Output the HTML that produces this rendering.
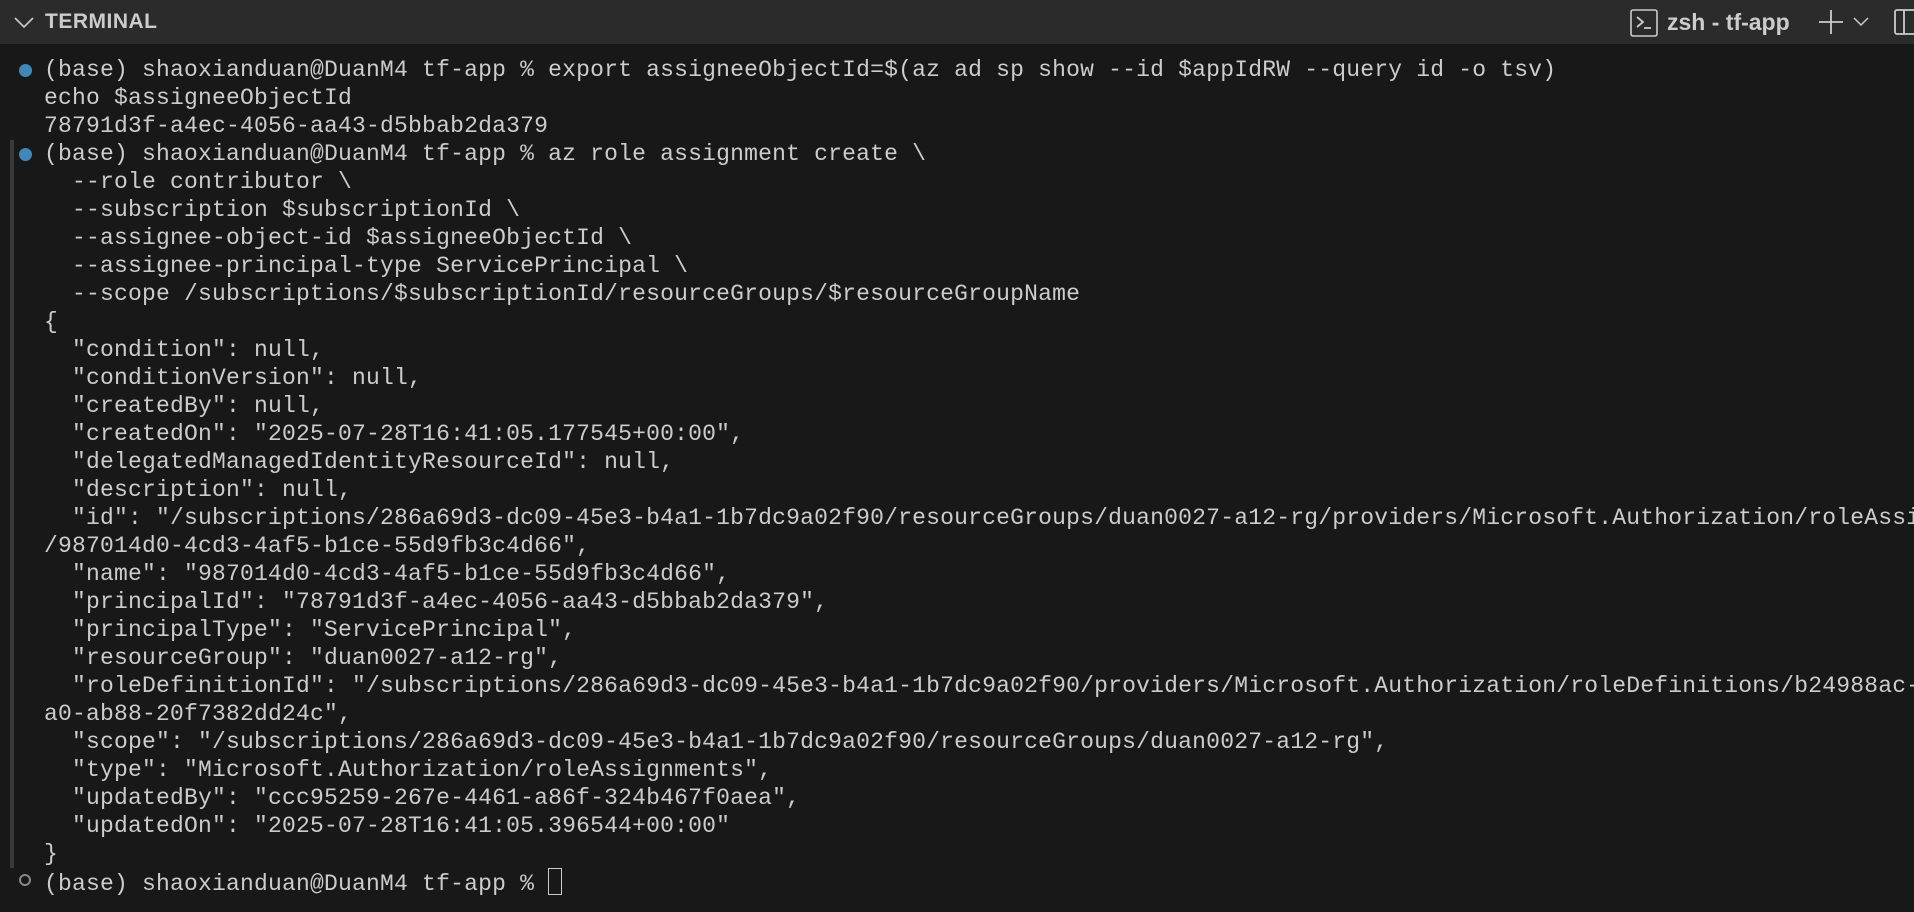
<!DOCTYPE html>
<html><head><style>
html,body{margin:0;padding:0;width:1914px;height:912px;overflow:hidden;background:#181818;}
.hdr{position:absolute;left:0;top:0;width:1914px;height:44px;background:#2b2b2b;font-family:"Liberation Sans",sans-serif;color:#cccccc;}
.t{position:absolute;left:45px;top:10px;font-size:21px;font-weight:bold;letter-spacing:0.5px;}
.z{position:absolute;left:1667px;top:9px;font-size:23px;font-weight:bold;}
.term{position:absolute;left:44px;top:56px;width:1870px;overflow:hidden;font-family:"Liberation Mono",monospace;font-size:23px;letter-spacing:0.2px;line-height:28px;color:#cccccc;white-space:pre;}
.dot{position:absolute;left:19px;width:13px;height:13px;border-radius:50%;background:#3f88b9;}
.bar{position:absolute;left:10px;width:4px;background:#3a3a3a;}
</style></head><body>
<div class="hdr">
<svg style="position:absolute;left:14px;top:15px" width="20" height="14"><path d="M1 3 L10 12 L19 3" fill="none" stroke="#ccc" stroke-width="1.6"/></svg>
<div class="t">TERMINAL</div>
<svg style="position:absolute;left:1630px;top:9px" width="28" height="28"><rect x="1" y="1" width="26" height="26" rx="2" fill="none" stroke="#ccc" stroke-width="1.6"/><path d="M7 8 L13 13 L7 18 M14 19 H21" fill="none" stroke="#ccc" stroke-width="1.8"/></svg>
<div class="z">zsh - tf-app</div>
<svg style="position:absolute;left:1818px;top:9px" width="26" height="26"><path d="M13 1 V25 M1 13 H25" stroke="#ccc" stroke-width="1.8"/></svg>
<svg style="position:absolute;left:1853px;top:17px" width="16" height="10"><path d="M1 1 L8 8 L15 1" fill="none" stroke="#ccc" stroke-width="1.5"/></svg>
<svg style="position:absolute;left:1894px;top:9px" width="20" height="26"><rect x="1" y="1" width="26" height="24" rx="2" fill="none" stroke="#ccc" stroke-width="1.8"/><path d="M10 1 V25" stroke="#ccc" stroke-width="1.8"/></svg>
</div>
<div class="dot" style="top:64px"></div>
<div class="dot" style="top:148px"></div>
<div class="bar" style="top:140px;height:728px"></div>
<div style="position:absolute;left:19px;top:874px;width:8px;height:8px;border:2px solid #888;border-radius:50%"></div>
<div class="term">(base) shaoxianduan@DuanM4 tf-app % export assigneeObjectId=$(az ad sp show --id $appIdRW --query id -o tsv)
echo $assigneeObjectId
78791d3f-a4ec-4056-aa43-d5bbab2da379
(base) shaoxianduan@DuanM4 tf-app % az role assignment create \
  --role contributor \
  --subscription $subscriptionId \
  --assignee-object-id $assigneeObjectId \
  --assignee-principal-type ServicePrincipal \
  --scope /subscriptions/$subscriptionId/resourceGroups/$resourceGroupName
{
  "condition": null,
  "conditionVersion": null,
  "createdBy": null,
  "createdOn": "2025-07-28T16:41:05.177545+00:00",
  "delegatedManagedIdentityResourceId": null,
  "description": null,
  "id": "/subscriptions/286a69d3-dc09-45e3-b4a1-1b7dc9a02f90/resourceGroups/duan0027-a12-rg/providers/Microsoft.Authorization/roleAssignments
/987014d0-4cd3-4af5-b1ce-55d9fb3c4d66",
  "name": "987014d0-4cd3-4af5-b1ce-55d9fb3c4d66",
  "principalId": "78791d3f-a4ec-4056-aa43-d5bbab2da379",
  "principalType": "ServicePrincipal",
  "resourceGroup": "duan0027-a12-rg",
  "roleDefinitionId": "/subscriptions/286a69d3-dc09-45e3-b4a1-1b7dc9a02f90/providers/Microsoft.Authorization/roleDefinitions/b24988ac-6180-42
a0-ab88-20f7382dd24c",
  "scope": "/subscriptions/286a69d3-dc09-45e3-b4a1-1b7dc9a02f90/resourceGroups/duan0027-a12-rg",
  "type": "Microsoft.Authorization/roleAssignments",
  "updatedBy": "ccc95259-267e-4461-a86f-324b467f0aea",
  "updatedOn": "2025-07-28T16:41:05.396544+00:00"
}
(base) shaoxianduan@DuanM4 tf-app % <span style="display:inline-block;width:12px;height:25px;border:1.5px solid #ccc;vertical-align:-5px"></span></div>
</body></html>
